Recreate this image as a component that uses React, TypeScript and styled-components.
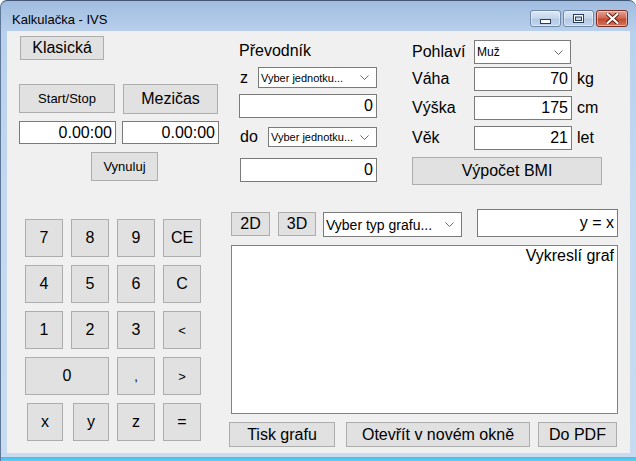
import React from "react";
import styled, { createGlobalStyle } from "styled-components";

const Global = createGlobalStyle`
  html, body { margin: 0; padding: 0; background: #ffffff; }
  body { width: 636px; height: 461px; overflow: hidden; font-family: "Liberation Sans", Arial, sans-serif; }
  * { box-sizing: border-box; }
`;

const FONT = `"Liberation Sans", Arial, sans-serif`;

const Window = styled.div`
  width: 636px;
  height: 461px;
  display: flex;
  flex-direction: column;
  background: linear-gradient(180deg, #a0bcdf 0px, #b9d0ec 30px, #c4d8ef 200px, #c8dbf0 100%);
  border-top: 1px solid #3f5573;
  border-left: 1px solid #5d7799;
  border-top-left-radius: 7px;
  border-top-right-radius: 7px;
  overflow: hidden;
`;

const TitleBar = styled.div`
  height: 30px;
  display: flex;
  justify-content: space-between;
  align-items: flex-start;
  flex-shrink: 0;
`;

const Title = styled.div`
  font-family: ${FONT};
  font-size: 13px;
  color: #000;
  padding-left: 11px;
  padding-top: 11px;
  line-height: 15px;
`;

const CaptionGroup = styled.div`
  display: flex;
  gap: 2px;
  margin-top: 9px;
  margin-right: 8px;
`;

const CaptionButton = styled.div<{ $close?: boolean; $w: number }>`
  width: ${(p) => p.$w}px;
  height: 17px;
  border: 1px solid ${(p) => (p.$close ? "#7a2d22" : "#6f87a8")};
  border-radius: 3px;
  background: ${(p) =>
    p.$close
      ? "linear-gradient(180deg, #e4a294 0%, #d26c56 45%, #c34a30 55%, #d0765f 100%)"
      : "linear-gradient(180deg, #dde8f5 0%, #c6d7ec 45%, #b3c9e4 55%, #c3d6ec 100%)"};
  display: flex;
  align-items: center;
  justify-content: center;
  box-shadow: inset 0 0 0 1px rgba(255, 255, 255, 0.45);
`;

const ClientWrap = styled.div`
  display: flex;
  padding-left: 6px;
  flex-shrink: 0;
`;

const Client = styled.div`
  width: 623px;
  height: 422px;
  background: #f0f0f0;
  display: flex;
  flex-direction: column;
  font-family: ${FONT};
  color: #000;
`;

const FrameBottom = styled.div`
  height: 4px;
  flex-shrink: 0;
`;

const TaskLine = styled.div`
  flex: 1;
  background: linear-gradient(180deg, #3fc1ea 0%, #62cdee 100%);
  margin-left: -1px;
`;

const TopRow = styled.div`
  display: flex;
  align-items: flex-start;
  height: 178px;
  flex-shrink: 0;
`;

const Column = styled.div<{ $left: number; $width: number; $top: number }>`
  margin-left: ${(p) => p.$left}px;
  width: ${(p) => p.$width}px;
  padding-top: ${(p) => p.$top}px;
  display: flex;
  flex-direction: column;
  align-items: flex-start;
  flex-shrink: 0;
`;

const Btn = styled.div<{ $w: number; $h: number; $fs?: number; $mt?: number; $ml?: number }>`
  width: ${(p) => p.$w}px;
  height: ${(p) => p.$h}px;
  margin-top: ${(p) => p.$mt ?? 0}px;
  margin-left: ${(p) => p.$ml ?? 0}px;
  background: #e1e1e1;
  border: 1px solid #adadad;
  font-family: ${FONT};
  font-size: ${(p) => p.$fs ?? 16}px;
  color: #000;
  display: flex;
  align-items: center;
  justify-content: center;
  flex-shrink: 0;
  white-space: nowrap;
`;

const TextBox = styled.div<{ $w: number; $h: number; $mt?: number; $ml?: number }>`
  width: ${(p) => p.$w}px;
  height: ${(p) => p.$h}px;
  margin-top: ${(p) => p.$mt ?? 0}px;
  margin-left: ${(p) => p.$ml ?? 0}px;
  background: #ffffff;
  border: 1px solid #7a7a7a;
  font-family: ${FONT};
  font-size: 16px;
  line-height: ${(p) => p.$h - 2}px;
  text-align: right;
  padding-right: 3px;
  flex-shrink: 0;
  white-space: nowrap;
`;

const Combo = styled.div<{ $w: number; $h: number; $fs: number; $mt?: number; $ml?: number }>`
  width: ${(p) => p.$w}px;
  height: ${(p) => p.$h}px;
  margin-top: ${(p) => p.$mt ?? 0}px;
  margin-left: ${(p) => p.$ml ?? 0}px;
  background: #ffffff;
  border: 1px solid #7a7a7a;
  font-family: ${FONT};
  font-size: ${(p) => p.$fs}px;
  display: flex;
  align-items: center;
  justify-content: space-between;
  padding: 0 7px 0 2px;
  flex-shrink: 0;
  white-space: nowrap;
`;

const Heading = styled.div`
  font-size: 16px;
  line-height: 18px;
  height: 18px;
`;

const LabeledRow = styled.div<{ $mt: number; $h: number }>`
  width: 100%;
  height: ${(p) => p.$h}px;
  margin-top: ${(p) => p.$mt}px;
  display: flex;
  align-items: center;
  justify-content: space-between;
`;

const Label = styled.span<{ $w?: number }>`
  font-size: 16px;
  line-height: 18px;
  width: ${(p) => (p.$w ? `${p.$w}px` : "auto")};
  padding-left: 1px;
  flex-shrink: 0;
`;

const BmiRow = styled.div<{ $mt: number }>`
  display: flex;
  align-items: center;
  height: 24px;
  margin-top: ${(p) => p.$mt}px;
`;

const Unit = styled.span`
  font-size: 16px;
  margin-left: 5px;
`;

const PairRow = styled.div<{ $mt: number; $gap: number }>`
  display: flex;
  align-items: flex-start;
  gap: ${(p) => p.$gap}px;
  margin-top: ${(p) => p.$mt}px;
`;

const BottomRow = styled.div`
  display: flex;
  align-items: flex-start;
`;

const Keypad = styled.div`
  margin-left: 18px;
  margin-top: 10px;
  display: grid;
  grid-template-columns: repeat(4, 38px);
  grid-auto-rows: 38px;
  gap: 8px;
  flex-shrink: 0;
`;

const Key = styled.div<{ $span?: number; $ml?: number; $fs?: number }>`
  grid-column: span ${(p) => p.$span ?? 1};
  margin-left: ${(p) => p.$ml ?? 0}px;
  background: #e1e1e1;
  border: 1px solid #adadad;
  font-size: ${(p) => p.$fs ?? 16}px;
  display: flex;
  align-items: center;
  justify-content: center;
`;

const GraphColumn = styled.div`
  margin-left: 30px;
  width: 387px;
  display: flex;
  flex-direction: column;
  flex-shrink: 0;
`;

const GraphToolbar = styled.div`
  display: flex;
  align-items: flex-start;
  height: 28px;
`;

const GraphArea = styled.div`
  margin-top: 8px;
  width: 387px;
  height: 169px;
  background: #ffffff;
  border: 1px solid #828282;
  font-size: 16px;
  text-align: right;
  padding: 1px 3px 0 0;
  line-height: 18px;
`;

const ButtonRow = styled.div`
  display: flex;
  margin-top: 8px;
  margin-left: -2px;
`;

const Chevron = () => (
  <svg width="9" height="5" viewBox="0 0 9 5">
    <polyline points="0.5,0.5 4.5,4.5 8.5,0.5" fill="none" stroke="#6b6b6b" strokeWidth="1" />
  </svg>
);

const keys: { label: string; span?: number; ml?: number; fs?: number }[] = [
  { label: "7" }, { label: "8" }, { label: "9" }, { label: "CE" },
  { label: "4" }, { label: "5" }, { label: "6" }, { label: "C" },
  { label: "1" }, { label: "2" }, { label: "3" }, { label: "<", fs: 13 },
  { label: "0", span: 2 }, { label: ",", fs: 13 }, { label: ">", fs: 13 },
  { label: "x", ml: 2 }, { label: "y", ml: 2 }, { label: "z" }, { label: "=" },
];

export default function App() {
  return (
    <>
      <Global />
      <Window>
        <TitleBar>
          <Title>Kalkulačka - IVS</Title>
          <CaptionGroup>
            <CaptionButton $w={31}>
              <svg width="11" height="5" viewBox="0 0 11 5" style={{ marginTop: 5 }}>
                <rect x="0.5" y="0.5" width="10" height="4" fill="#ffffff" stroke="#2b3f5c" />
              </svg>
            </CaptionButton>
            <CaptionButton $w={31}>
              <svg width="11" height="9" viewBox="0 0 11 9">
                <rect x="0.5" y="0.5" width="10" height="8" fill="#ffffff" stroke="#2b3f5c" />
                <rect x="2.5" y="3" width="6" height="3.5" fill="#c6d7ec" stroke="#2b3f5c" />
              </svg>
            </CaptionButton>
            <CaptionButton $w={32} $close>
              <svg width="13" height="11" viewBox="0 0 13 11">
                <path d="M1.5 1 L11.5 10 M11.5 1 L1.5 10" stroke="#5a1a10" strokeWidth="4" strokeLinecap="round" />
                <path d="M1.5 1 L11.5 10 M11.5 1 L1.5 10" stroke="#ffffff" strokeWidth="2.2" strokeLinecap="round" />
              </svg>
            </CaptionButton>
          </CaptionGroup>
        </TitleBar>
        <ClientWrap>
          <Client>
            <TopRow>
              <Column $left={12} $width={200} $top={5}>
                <Btn $w={84} $h={24} $ml={1}>Klasická</Btn>
                <PairRow $mt={24} $gap={8}>
                  <Btn $w={96} $h={29} $fs={13}>Start/Stop</Btn>
                  <Btn $w={95} $h={30}>Mezičas</Btn>
                </PairRow>
                <PairRow $mt={7} $gap={6}>
                  <TextBox $w={97} $h={23}>0.00:00</TextBox>
                  <TextBox $w={97} $h={23}>0.00:00</TextBox>
                </PairRow>
                <Btn $w={67} $h={29} $fs={13} $mt={8} $ml={72}>Vynuluj</Btn>
              </Column>

              <Column $left={20} $width={138} $top={11}>
                <Heading>Převodník</Heading>
                <LabeledRow $mt={7} $h={21}>
                  <Label>z</Label>
                  <Combo $w={119} $h={21} $fs={11}>
                    Vyber jednotku...
                    <Chevron />
                  </Combo>
                </LabeledRow>
                <TextBox $w={138} $h={24} $mt={6}>0</TextBox>
                <LabeledRow $mt={9} $h={20}>
                  <Label>do</Label>
                  <Combo $w={109} $h={20} $fs={11}>
                    Vyber jednotku...
                    <Chevron />
                  </Combo>
                </LabeledRow>
                <TextBox $w={137} $h={24} $mt={11} $ml={1}>0</TextBox>
              </Column>

              <Column $left={34} $width={191} $top={9}>
                <BmiRow $mt={0}>
                  <Label $w={63}>Pohlaví</Label>
                  <Combo $w={97} $h={24} $fs={12}>
                    Muž
                    <Chevron />
                  </Combo>
                </BmiRow>
                <BmiRow $mt={3}>
                  <Label $w={63}>Váha</Label>
                  <TextBox $w={98} $h={24}>70</TextBox>
                  <Unit>kg</Unit>
                </BmiRow>
                <BmiRow $mt={5}>
                  <Label $w={63}>Výška</Label>
                  <TextBox $w={98} $h={24}>175</TextBox>
                  <Unit>cm</Unit>
                </BmiRow>
                <BmiRow $mt={6}>
                  <Label $w={63}>Věk</Label>
                  <TextBox $w={98} $h={24}>21</TextBox>
                  <Unit>let</Unit>
                </BmiRow>
                <Btn $w={190} $h={28} $mt={7} $ml={1}>Výpočet BMI</Btn>
              </Column>
            </TopRow>

            <BottomRow>
              <Keypad>
                {keys.map((k, i) => (
                  <Key key={i} $span={k.span} $ml={k.ml} $fs={k.fs}>
                    {k.label}
                  </Key>
                ))}
              </Keypad>
              <GraphColumn>
                <GraphToolbar>
                  <Btn $w={39} $h={24} $mt={3}>2D</Btn>
                  <Btn $w={38} $h={24} $mt={3} $ml={8}>3D</Btn>
                  <Combo $w={139} $h={25} $fs={14} $mt={3} $ml={7}>
                    Vyber typ grafu...
                    <Chevron />
                  </Combo>
                  <TextBox $w={141} $h={28} $ml={15}>y = x</TextBox>
                </GraphToolbar>
                <GraphArea>Vykreslí graf</GraphArea>
                <ButtonRow>
                  <Btn $w={106} $h={25}>Tisk grafu</Btn>
                  <Btn $w={184} $h={25} $ml={11}>Otevřít v novém okně</Btn>
                  <Btn $w={79} $h={25} $ml={8}>Do PDF</Btn>
                </ButtonRow>
              </GraphColumn>
            </BottomRow>
          </Client>
        </ClientWrap>
        <FrameBottom />
        <TaskLine />
      </Window>
    </>
  );
}
